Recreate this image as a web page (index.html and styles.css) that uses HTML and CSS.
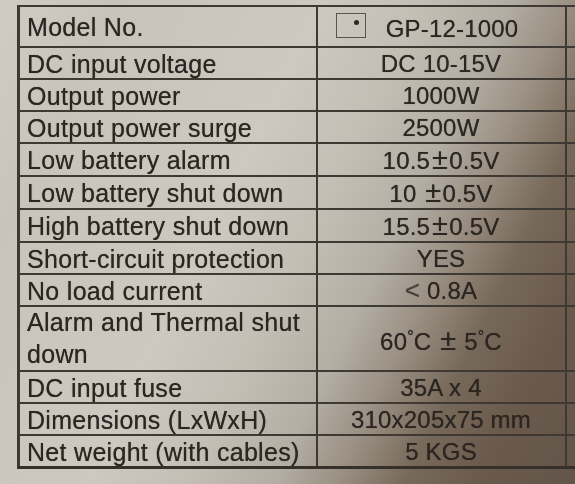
FILE: index.html
```html
<!DOCTYPE html>
<html lang="en">
<head>
<meta charset="utf-8">
<title>Specifications</title>
<link rel="stylesheet" href="styles.css">
</head>
<body>
<div class="sheet">
  <table class="spec">
    <colgroup>
      <col class="col-label">
      <col class="col-value">
      <col class="col-extra">
    </colgroup>
    <tbody>
      <tr class="row-head">
        <td class="label">Model No.</td>
        <td class="value model"><span class="model-inner"><span class="checkbox"></span><span class="model-text">GP-12-1000</span></span></td>
        <td class="extra"></td>
      </tr>
      <tr><td class="label">DC input voltage</td><td class="value">DC 10-15V</td><td class="extra"></td></tr>
      <tr><td class="label">Output power</td><td class="value">1000W</td><td class="extra"></td></tr>
      <tr><td class="label">Output power surge</td><td class="value">2500W</td><td class="extra"></td></tr>
      <tr><td class="label">Low battery alarm</td><td class="value">10.5<span class="pm">±</span>0.5V</td><td class="extra"></td></tr>
      <tr><td class="label">Low battery shut down</td><td class="value">10 <span class="pm">±</span>0.5V</td><td class="extra"></td></tr>
      <tr><td class="label">High battery shut down</td><td class="value">15.5<span class="pm">±</span>0.5V</td><td class="extra"></td></tr>
      <tr><td class="label">Short-circuit protection</td><td class="value">YES</td><td class="extra"></td></tr>
      <tr><td class="label">No load current</td><td class="value"><span class="lt">&lt;</span> 0.8A</td><td class="extra"></td></tr>
      <tr class="row-tall"><td class="label two-line">Alarm and Thermal shut<br>down</td><td class="value">60<span class="deg">°</span>C <span class="pm">±</span> 5<span class="deg">°</span>C</td><td class="extra"></td></tr>
      <tr><td class="label">DC input fuse</td><td class="value">35A x 4</td><td class="extra"></td></tr>
      <tr><td class="label">Dimensions (LxWxH)</td><td class="value">310x205x75 mm</td><td class="extra"></td></tr>
      <tr class="row-last"><td class="label">Net weight (with cables)</td><td class="value">5 KGS</td><td class="extra"></td></tr>
    </tbody>
  </table>
</div>
</body>
</html>
```

FILE: styles.css
```css
html, body {
  margin: 0;
  padding: 0;
}

body {
  width: 575px;
  height: 484px;
  overflow: hidden;
  background: linear-gradient(116deg,
    #d0ccc4 0%,
    #c9c4bb 14%,
    #cdc8c0 40%,
    #c4bfb5 52%,
    #b3ada4 63%,
    #9c9285 70%,
    #77695a 79%,
    #6a5a4c 88%,
    #63554a 100%);
  font-family: "Liberation Sans", Arial, sans-serif;
  color: #2b2621;
}

.sheet {
  padding: 5px 0 0 17px;
}

.spec {
  border-collapse: collapse;
  table-layout: fixed;
  width: 590px;
  filter: blur(0.3px);
  text-shadow: 0 0 0.7px rgba(30, 25, 20, 0.7);
}

.col-label { width: 298px; }
.col-value { width: 249px; }
.col-extra { width: 43px; }

.spec td {
  border: 2px solid #3f3933;
  height: 29px;
  padding: 0;
  vertical-align: middle;
  white-space: nowrap;
  line-height: 28px;
}

.spec tr.row-head td {
  height: 38px;
}

.spec tr.row-tall td {
  height: 60px;
}

.spec tr.row-last td {
  border-bottom-width: 3px;
  border-bottom-color: #36302b;
}

.spec td.label {
  border-left-width: 3px;
  padding-left: 7px;
  font-size: 25px;
  letter-spacing: 0.3px;
  padding-top: 1px;
}

.spec td.two-line {
  line-height: 31.5px;
  padding-top: 0;
}

.spec td.value {
  text-align: center;
  font-size: 24px;
  letter-spacing: 0.2px;
  padding-top: 1px;
}

.spec td.extra {
  border-right: none;
}

.spec td.model {
  padding-top: 0;
}

.model-inner {
  display: inline-flex;
  align-items: center;
  gap: 20px;
  margin-right: 28px;
}

.model-text {
  padding-top: 6px;
}

.checkbox {
  position: relative;
  display: inline-block;
  width: 28px;
  height: 23px;
  border: 1px solid #5a544e;
}

.checkbox::after {
  content: "";
  position: absolute;
  left: 17px;
  top: 6px;
  width: 5px;
  height: 5px;
  border-radius: 50%;
  background: #2e2925;
}

.pm {
  font-size: 29px;
  margin: 0 1px 0 2px;
}

.deg {
  font-size: 16px;
  vertical-align: 8px;
}

.lt {
  font-size: 26px;
  color: #4a443e;
}
```
